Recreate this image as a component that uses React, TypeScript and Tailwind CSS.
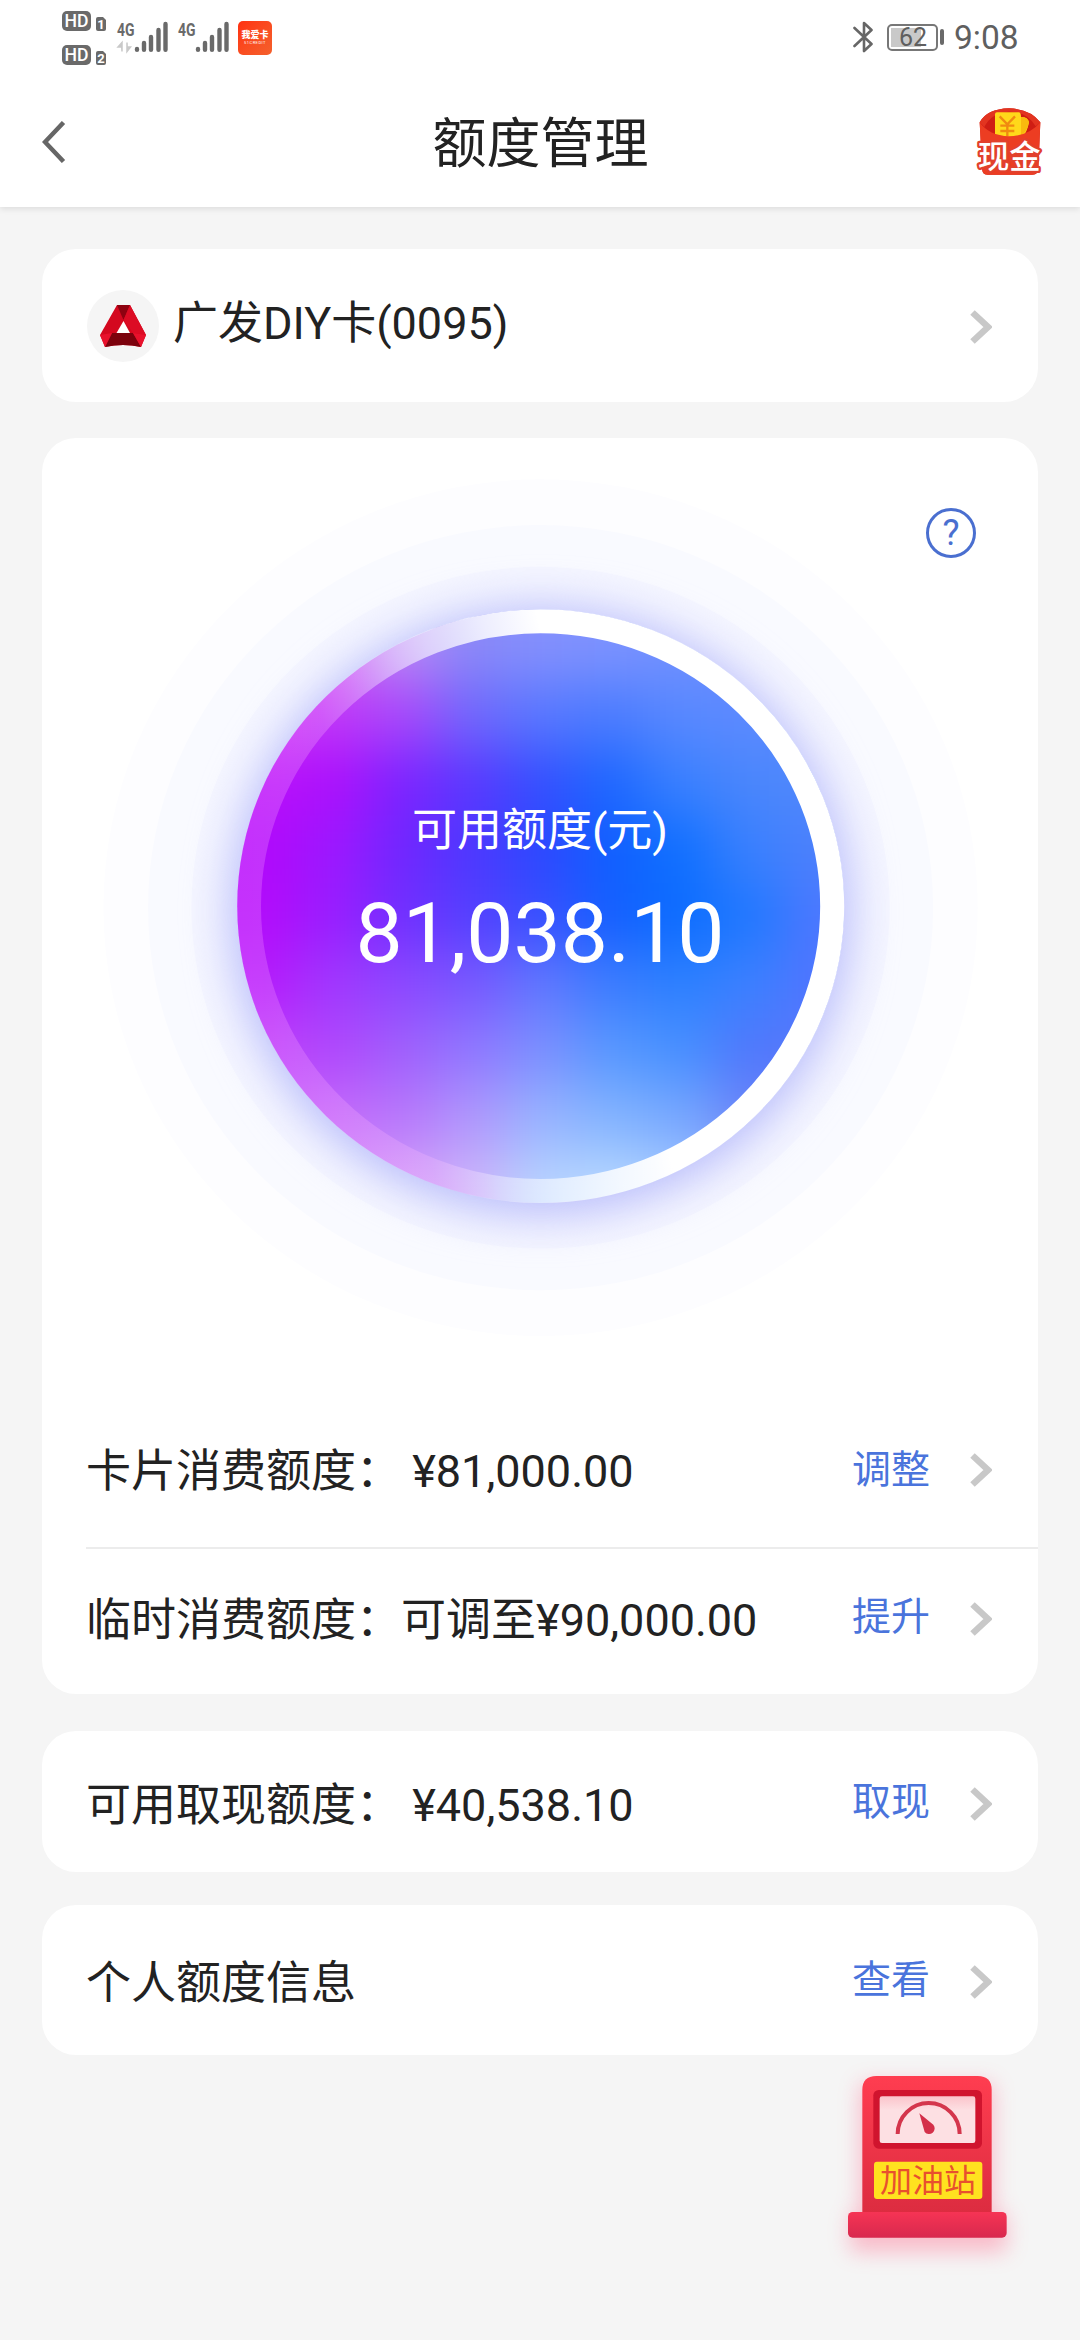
import React from 'react';

type Row = { label: string; amount?: string; action: string };

const limitRows: Row[] = [
    { label: '卡片消费额度：', amount: ' ¥81,000.00', action: '调整' },
    { label: '临时消费额度：', amount: '可调至¥90,000.00', action: '提升' },
];

// Colour mesh of the dial, blurred into a smooth fill
const mesh = [
    ['#d050f4', '#d058f4', '#b888f6', '#8a88f8', '#8490fd', '#7c92ff', '#7090ff', '#6888ff', '#6088ff'],
    ['#cc30f6', '#c038f8', '#a848fa', '#7068fc', '#5878ff', '#4c7cff', '#5888ff', '#5c8aff', '#5a88ff'],
    ['#b810fa', '#ac10fc', '#7c24ff', '#5a38ff', '#3450ff', '#1e68ff', '#3a80ff', '#4a86fc', '#5088fc'],
    ['#b008fb', '#9c18ff', '#7026ff', '#4c38ff', '#2c48ff', '#1060ff', '#1070ff', '#3a80fe', '#4c80fc'],
    ['#b20cfb', '#981eff', '#7030ff', '#5440ff', '#3850ff', '#1460ff', '#0c6cff', '#2078ff', '#4c78ff'],
    ['#b41cfb', '#a038fe', '#8c48ff', '#7858ff', '#6078ff', '#3c7cff', '#2c80ff', '#3c80ff', '#5074ff'],
    ['#bc40fa', '#b048fc', '#a060fc', '#9078ff', '#7c90ff', '#5898ff', '#4890ff', '#5078fc', '#5878fa'],
    ['#c060fa', '#c46cfa', '#b878fb', '#b098fc', '#98b4ff', '#84b4ff', '#78a8ff', '#6c84f8', '#6878f8'],
    ['#d090f8', '#d090f8', '#d4a0f8', '#ccb4fa', '#b8d4ff', '#b8d8ff', '#a8ccff', '#90a8fa', '#8090f8'],
];

const Chevron = ({ className = '' }: { className?: string }) => (
    <svg viewBox="0 0 22 34" className={`h-[34px] w-[22px] ${className}`} fill="none" stroke="#c8c8c8" strokeWidth="6.5">
        <path d="M2.5 2.5L18 17L2.5 31.5" />
    </svg>
);

function SimBadge({ slot }: { slot: string }) {
    return (
        <svg viewBox="0 0 46 20" className="h-5 w-[46px] overflow-visible" fontFamily="Roboto, sans-serif">
            <rect width="29" height="20" rx="5" fill="#6a6a6a" />
            <text x="14.5" y="16.3" fontSize="18" fontWeight="500" fill="#fff" textAnchor="middle" textLength="24" lengthAdjust="spacingAndGlyphs">HD</text>
            <path d="M34 8q0-2 2-2h5l3 3v9q0 2-2 2h-6q-2 0-2-2z" fill="#6a6a6a" />
            <text x="39" y="18" fontSize="13" fontWeight="700" fill="#fff" textAnchor="middle">{slot}</text>
        </svg>
    );
}

function Signal({ data = false }: { data?: boolean }) {
    return (
        <svg viewBox="0 0 51 32" className="h-8 w-[51px] overflow-visible" fontFamily="Roboto, sans-serif">
            <text x="0" y="14.5" fontSize="19" fontWeight="700" fill="#6a6a6a" textLength="17.5" lengthAdjust="spacingAndGlyphs">4G</text>
            {data && <path d="M5 30.500V21.500L1 26H4M10 21.500v9l3.500-4.500h-3" fill="#c9c9c9" stroke="#c9c9c9" strokeWidth="1.5" />}
            <g stroke="#6a6a6a" strokeWidth="4.400" strokeLinecap="round">
                <path d="M20 28v.8M27 22v6.800M34 16v12.800M41.500 9v19.800M48.500 3v25.800" />
            </g>
        </svg>
    );
}

function StatusBar() {
    return (
        <div className="flex h-[76px] justify-between pl-[62px] pr-[61px] text-[#5f5f5f]">
            <div className="flex">
                <div className="flex flex-col gap-[14px] pt-[11px]">
                    <SimBadge slot="1" />
                    <SimBadge slot="2" />
                </div>
                <div className="ml-[9px] flex gap-[10px] pt-[21px]">
                    <Signal data />
                    <Signal />
                </div>
                <div className="ml-[9px] mt-[21px] flex h-[34px] w-[34px] flex-col items-center justify-center rounded-[5px] bg-linear-to-br from-[#ff3010] to-[#f4602c] text-white">
                    <span className="text-[9px] leading-[10px] font-black">我爱卡</span>
                    <span className="text-[4px] leading-[6px] tracking-[0.5px]">51CREDIT</span>
                </div>
            </div>
            <div className="flex items-start">
                <svg viewBox="0 0 20 32" className="mt-[21px] h-8 w-5" fill="none" stroke="#666" strokeWidth="2.600" strokeLinejoin="round" strokeLinecap="round">
                    <path d="M1.500 7L18.500 23L11 30V2L18.500 9L1.500 25" />
                </svg>
                <div className="mt-6 ml-[14px] flex h-[27px] w-[51px] rounded-[5px] border-2 border-[#777] p-[2px]">
                    <div className="flex h-full w-[30px] items-center bg-[#c9c9c9]">
                        <span className="pl-[8px] text-[25px] leading-none">62</span>
                    </div>
                </div>
                <div className="mt-[29px] ml-[2px] h-4 w-1 rounded-sm bg-[#6a6a6a]" />
                <span className="mt-[17px] ml-[10px] w-[65px] text-[33.500px] leading-[42px] whitespace-nowrap">9:08</span>
            </div>
        </div>
    );
}

function RedPacket() {
    return (
        <svg viewBox="0 0 198 210" className="h-[70px] w-[66px] overflow-visible">
            <path d="M8 46Q30 6 96 4Q160 6 190 46L184 188Q182 203 166 203H32Q16 203 16 188z" fill="#cf1d14" />
            <path d="M8 46Q30 6 96 4Q160 6 190 46L176 58Q150 14 96 14Q44 16 22 60z" fill="#e23420" />
            <path d="M54 22Q54 16 60 16H125Q132 16 132 30Q152 30 156 46Q150 76 136 92H62Q54 92 54 80z" fill="#ffd81a" />
            <path d="M132 30Q154 30 156 46Q150 76 132 86z" fill="#f9b90f" />
            <path d="M68 28L91 52L114 28M91 52V88M70 56H112M70 72H112" fill="none" stroke="#f08a10" strokeWidth="7" />
            <path d="M8 46Q36 86 96 88Q158 86 190 46L184 186Q182 203 164 203H32Q16 203 15 186z" fill="#ec3d22" />
            <text x="97" y="182" fontSize="94" fontWeight="500" textAnchor="middle" fill="#fff" stroke="#e2402c" strokeWidth="14" strokeLinejoin="round" paintOrder="stroke">现金</text>
        </svg>
    );
}

function CardLogo() {
    return (
        <div className="flex h-[72px] w-[72px] items-center justify-center rounded-full bg-[#f5f5f5]">
            <svg viewBox="0 0 46 42" className="h-[42px] w-[46px]">
                <path d="M17 0H30L46 30L41 42Q23 38 5 42L0 30z" fill="#d4081f" />
                <path d="M17 0H30L23.500 15z" fill="#8d0210" />
                <path d="M23.500 15L30 0L46 30L33 28z" fill="#dc0c24" />
                <path d="M12 28H33L41 42Q23 38 5 42z" fill="#7c020d" />
                <path d="M0 30L12 28L5 42z" fill="#e8112c" />
                <path d="M46 30L33 28L41 42z" fill="#e8112c" />
                <path d="M23.500 16L30 28H16.500z" fill="#fff" />
            </svg>
        </div>
    );
}

function Dial() {
    return (
        <div className="relative mx-auto h-[920px] w-[920px]">
            <svg viewBox="0 0 1568 1568" className="h-full w-full">
                <defs>
                    <filter id="soft" x="-20%" y="-20%" width="140%" height="140%" colorInterpolationFilters="sRGB">
                        <feGaussianBlur stdDeviation="44" />
                    </filter>
                    <filter id="halo" x="-30%" y="-30%" width="160%" height="160%" colorInterpolationFilters="sRGB">
                        <feGaussianBlur stdDeviation="38" />
                    </filter>
                    <clipPath id="disc">
                        <ellipse cx="785" cy="777.500" rx="517" ry="505.500" />
                    </clipPath>
                    <linearGradient id="ring" x1="0" x2="1" y1="0.620" y2="0.380">
                        <stop offset="0" stopColor="#ffa0ff" stopOpacity="0.250" />
                        <stop offset="0.220" stopColor="#ffc0ff" stopOpacity="0.250" />
                        <stop offset="0.320" stopColor="#fff" stopOpacity="0.350" />
                        <stop offset="0.420" stopColor="#fff" stopOpacity="0.620" />
                        <stop offset="0.520" stopColor="#fff" stopOpacity="0.850" />
                        <stop offset="0.610" stopColor="#fff" />
                    </linearGradient>
                </defs>
                <ellipse cx="785" cy="780" rx="745" ry="730" fill="#fdfdff" />
                <ellipse cx="785" cy="780" rx="669" ry="652" fill="#f9faff" />
                <ellipse cx="785" cy="780" rx="595" ry="581" fill="#f5f6ff" />
                <ellipse cx="785" cy="786" rx="528" ry="518" fill="#b8bcfb" filter="url(#halo)" />
                <g clipPath="url(#disc)">
                    <g filter="url(#soft)">
                        {/* Edge cells run past the disc so the blur never fades out inside it */}
                        {mesh.map((line, j) =>
                            line.map((color, i) => {
                                const x = i === 0 ? 56 : 256 + i * 118;
                                const y = j === 0 ? 78 : 278 + j * 115;
                                return (
                                    <rect
                                        key={`${i}-${j}`}
                                        x={x}
                                        y={y}
                                        width={i === 0 || i === 8 ? 320 : 120}
                                        height={j === 0 || j === 8 ? 317 : 117}
                                        fill={color}
                                    />
                                );
                            })
                        )}
                    </g>
                </g>
                <ellipse cx="785" cy="777.500" rx="497" ry="485.500" fill="none" stroke="url(#ring)" strokeWidth="41" />
            </svg>
            <div className="absolute inset-0 flex flex-col items-center text-white">
                <span className="mt-[349px] text-[45px] leading-[64px]">可用额度(元)</span>
                <span className="mt-[21px] text-[84px] leading-[100px]">81,038.10</span>
            </div>
            <button className="absolute top-[58px] left-[846px] flex h-[50px] w-[50px] items-center justify-center rounded-full border-[3px] border-[#4a6fd0] text-[36px] leading-none text-[#4a6fd0]">
                ?
            </button>
        </div>
    );
}

function LimitRow({ row, className, actionClass = '' }: { row: Row; className: string; actionClass?: string }) {
    return (
        <div className={`flex items-center pl-[44px] pr-[46px] ${className}`}>
            <span className="pt-1 text-[45px] leading-[64px] whitespace-pre">{row.label}{row.amount}</span>
            <span className={`ml-auto text-[39px] leading-[56px] text-[#4a74dc] ${actionClass}`}>{row.action}</span>
            <Chevron className="ml-[40px]" />
        </div>
    );
}

function GasStation() {
    return (
        <svg viewBox="0 0 660 660" className="absolute top-[2050px] left-[820px] h-[220px] w-[220px] overflow-visible">
            <defs>
                <filter id="glow" x="-30%" y="-30%" width="160%" height="160%">
                    <feGaussianBlur stdDeviation="32" />
                </filter>
                <linearGradient id="body" x1="0" x2="0" y1="0" y2="1">
                    <stop offset="0" stopColor="#ff3d50" />
                    <stop offset="1" stopColor="#dc2c40" />
                </linearGradient>
                <linearGradient id="foot" x1="0" x2="0" y1="0" y2="1">
                    <stop offset="0" stopColor="#f63454" />
                    <stop offset="1" stopColor="#d8284e" />
                </linearGradient>
                <linearGradient id="screen" x1="0" x2="0" y1="0" y2="1">
                    <stop offset="0" stopColor="#fbc4cb" />
                    <stop offset="0.300" stopColor="#fde0e3" />
                </linearGradient>
            </defs>
            <path d="M120 100H520V490H560V606H90V490H120z" fill="#ff5078" opacity="0.350" filter="url(#glow)" />
            <path d="M127 490V120Q127 78 169 78H473Q515 78 515 120V490z" fill="url(#body)" />
            <rect x="84" y="486" width="476" height="77" rx="14" fill="url(#foot)" />
            <rect x="160" y="120" width="326" height="176" rx="16" fill="#d0142e" />
            <rect x="179" y="139" width="287" height="140" rx="7" fill="url(#screen)" />
            <path d="M233 252A92 92 0 0 1 419 252" fill="none" stroke="#d4364c" strokeWidth="12" />
            <path d="M298 190L340 224A17 17 0 1 1 314 246z" fill="#d4304a" />
            <rect x="162" y="335" width="325" height="112" rx="9" fill="#ffe21f" />
            <text x="324" y="427" fontSize="96" textAnchor="middle" fill="#e8502e">加油站</text>
        </svg>
    );
}

export default function App() {
    return (
        <div className="relative h-[2340px] w-[1080px] overflow-hidden bg-[#f5f5f5] font-['Roboto','Noto_Sans_CJK_SC',sans-serif] text-[#222]">
            <header className="h-[207px] bg-white shadow-[0_2px_6px_rgba(0,0,0,0.10)]">
                <StatusBar />
                <div className="flex h-[131px] items-center justify-between pr-[37px] pl-[42px]">
                    <svg viewBox="0 0 24 42" className="h-[42px] w-[62px]" fill="none" stroke="#666" strokeWidth="4.500" preserveAspectRatio="xMinYMid meet">
                        <path d="M21.500 1.500L3 21L21.500 40.500" />
                    </svg>
                    <h1 className="pt-[7px] text-[54px] leading-[80px] font-normal">额度管理</h1>
                    <RedPacket />
                </div>
            </header>

            <main className="px-[42px] pt-[42px]">
                {/* Selected card */}
                <section className="flex h-[153px] items-center rounded-[34px] bg-white pr-[46px] pl-[45px]">
                    <CardLogo />
                    <span className="mb-1 ml-[14px] text-[45px] leading-[64px]">广发DIY卡(0095)</span>
                    <Chevron className="mt-[2px] ml-auto" />
                </section>

                <section className="mt-[36px] h-[1256px] rounded-[34px] bg-white pt-3">
                    <Dial />
                    <LimitRow row={limitRows[0]} className="mt-[23px] h-[154px]" />
                    <div className="ml-[44px] h-[2px] bg-[#ececec]" />
                    <LimitRow row={limitRows[1]} className="h-[143px] pb-[3px]" actionClass="pb-[5px]" />
                </section>

                <section className="mt-[37px] rounded-[34px] bg-white">
                    <LimitRow row={{ label: '可用取现额度：', amount: ' ¥40,538.10', action: '取现' }} className="h-[141px] pt-[4px]" actionClass="pb-[4px]" />
                </section>

                <section className="mt-[33px] rounded-[34px] bg-white">
                    <LimitRow row={{ label: '个人额度信息', action: '查看' }} className="h-[150px] pt-[3px]" actionClass="pb-1" />
                </section>
            </main>

            <GasStation />
        </div>
    );
}
